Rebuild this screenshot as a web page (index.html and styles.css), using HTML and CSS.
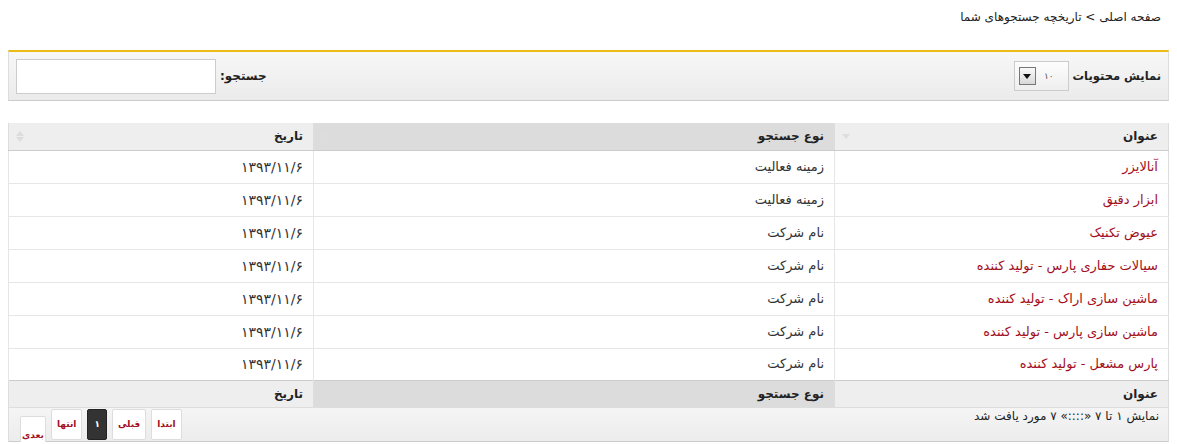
FILE: index.html
```html
<!DOCTYPE html>
<html lang="fa" dir="rtl">
<head>
   <meta charset="UTF-8">
   <title>تاریخچه جستجوهای شما</title>
   <link rel="stylesheet" href="styles.css">
</head>
<body>
   <div class="breadcrumb">صفحه اصلی &gt; تاریخچه جستجوهای شما</div>

   <div class="grid-wrap">
       <div class="toolbar">
           <div class="length">
               <span class="label">نمایش محتویات</span>
               <div class="select">
                   <span class="select-val">۱۰</span>
                   <span class="select-btn"><svg width="8" height="5" viewBox="0 0 8 5"><path d="M0 0h8L4 5z" fill="#111"/></svg></span>
               </div>
           </div>
           <div class="filter">
               <span class="label">جستجو:</span>
               <input class="search" type="text">
           </div>
       </div>

       <table class="grid">
           <thead>
               <tr>
                   <th class="col-title">عنوان<span class="sort sort-down"></span></th>
                   <th class="col-type sorted">نوع جستجو<span class="sort sort-both"></span></th>
                   <th class="col-date">تاریخ<span class="sort sort-both"></span></th>
               </tr>
           </thead>
           <tbody>
               <tr><td class="name">آنالایزر</td><td>زمینه فعالیت</td><td class="date">۱۳۹۳/۱۱/۶</td></tr>
               <tr><td class="name">ابزار دقیق</td><td>زمینه فعالیت</td><td class="date">۱۳۹۳/۱۱/۶</td></tr>
               <tr><td class="name">عیوض تکنیک</td><td>نام شرکت</td><td class="date">۱۳۹۳/۱۱/۶</td></tr>
               <tr><td class="name">سیالات حفاری پارس - تولید کننده</td><td>نام شرکت</td><td class="date">۱۳۹۳/۱۱/۶</td></tr>
               <tr><td class="name">ماشین سازی اراک - تولید کننده</td><td>نام شرکت</td><td class="date">۱۳۹۳/۱۱/۶</td></tr>
               <tr><td class="name">ماشین سازی پارس - تولید کننده</td><td>نام شرکت</td><td class="date">۱۳۹۳/۱۱/۶</td></tr>
               <tr><td class="name">پارس مشعل - تولید کننده</td><td>نام شرکت</td><td class="date">۱۳۹۳/۱۱/۶</td></tr>
           </tbody>
           <tfoot>
               <tr>
                   <th>عنوان</th>
                   <th class="sorted">نوع جستجو</th>
                   <th>تاریخ</th>
               </tr>
           </tfoot>
       </table>

       <div class="pager-bar">
           <div class="info">نمایش ۱ تا ۷ «::::» ۷ مورد یافت شد</div>
           <div class="pager">
               <a class="pg-btn">ابتدا</a>
               <a class="pg-btn">قبلی</a>
               <a class="pg-btn current">۱</a>
               <a class="pg-btn">انتها</a>
               <a class="pg-btn next">بعدی</a>
           </div>
       </div>
   </div>
</body>
</html>
```

FILE: styles.css
```css
* {
    box-sizing: border-box;
}

body {
    margin: 8px;
    font-family: "DejaVu Sans", sans-serif;
    font-size: 12px;
    color: #333;
    background: #fff;
}

.breadcrumb {
    padding: 2px 8px 0 0;
    height: 42px;
    color: #222;
}

.grid-wrap {
    width: 1161px;
}

.toolbar {
    display: flex;
    justify-content: space-between;
    align-items: center;
    height: 51px;
    padding: 0 7px 0 7px;
    border-top: 2px solid #ebbd12;
    border-left: 1px solid #ddd;
    border-right: 1px solid #ddd;
    border-bottom: 1px solid #ccc;
    background: linear-gradient(#f7f7f7, #ebebeb);
}

.label {
    font-weight: bold;
    color: #222;
}

.length .label {
    font-size: 11.5px;
}

.length, .filter {
    display: flex;
    align-items: center;
    gap: 4px;
}

.select {
    display: flex;
    justify-content: space-between;
    align-items: center;
    width: 55px;
    height: 30px;
    padding: 0 14px 0 4px;
    border: 1px solid #ccc;
    background: linear-gradient(#fdfdfd, #eee);
    font-size: 9px;
    color: #555;
}

.select-btn {
    display: flex;
    justify-content: center;
    align-items: center;
    width: 17px;
    height: 18px;
    border: 1px solid #777;
    background: linear-gradient(#fafafa, #d8d8d8);
}

.search {
    width: 200px;
    height: 35px;
    border: 1px solid #ccc;
    background: #fff;
    margin: 0;
}

.grid {
    width: 100%;
    border-collapse: collapse;
    margin-top: 22px;
    border-left: 1px solid #ddd;
    border-right: 1px solid #ddd;
}

.grid th {
    position: relative;
    height: 27px;
    padding: 0 10px;
    text-align: right;
    font-weight: bold;
    color: #222;
    background: #eee;
    border-left: 1px solid #ddd;
}

.grid thead th {
    border-bottom: 1px solid #ccc;
}

.grid tfoot th {
    border-top: 1px solid #ccc;
    border-bottom: 1px solid #ddd;
}

.grid th.sorted {
    background: #dcdcdc;
}

.col-title { width: 334px; }
.col-type { width: 521px; }

.sort {
    position: absolute;
    left: 7px;
    top: 8px;
    width: 8px;
    height: 12px;
}

.sort-both::before, .sort-both::after, .sort-down::after {
    content: "";
    position: absolute;
    left: 0;
    border-left: 4px solid transparent;
    border-right: 4px solid transparent;
}

.sort-both::before {
    top: 0;
    border-bottom: 5px solid #ddd;
}

.sort-both::after, .sort-down::after {
    top: 6px;
    border-top: 5px solid #ddd;
}

.sort-down::after {
    top: 3px;
}

.grid td {
    height: 33px;
    padding: 0 10px;
    border-left: 1px solid #e6e6e6;
    border-bottom: 1px solid #e6e6e6;
    color: #333;
    font-size: 13px;
    line-height: 16px;
}

.grid td.date {
    font-size: 14px;
    padding-left: 11px;
}

.grid tbody tr:last-child td {
    border-bottom: none;
    height: 32px;
}

.grid td.name {
    color: #a30f1e;
}

.pager-bar {
    display: flex;
    justify-content: space-between;
    align-items: flex-start;
    height: 34px;
    padding: 0 9px 0 0;
    background: linear-gradient(#f5f5f5, #ececec);
    border-left: 1px solid #ddd;
    border-right: 1px solid #ddd;
    border-bottom: 1px solid #ccc;
}

.info {
    padding-top: 1px;
    color: #222;
}

.pager {
    display: flex;
    gap: 5px;
    padding: 1px 0 0 0;
    margin-left: 11px;
}

.pg-btn {
    display: flex;
    align-items: center;
    justify-content: center;
    height: 31px;
    padding: 0 5px;
    background: #fff;
    border: 1px solid #ddd;
    border-radius: 2px;
    color: #a30f1e;
    font-size: 9px;
    font-weight: bold;
}

.pg-btn.current {
    background: #333;
    border-color: #222;
    color: #fff;
    padding: 0 6px;
}

.pg-btn.next {
    margin-top: 7px;
    height: 28px;
    align-items: flex-end;
    padding: 0 1px 3px 1px;
}
```
